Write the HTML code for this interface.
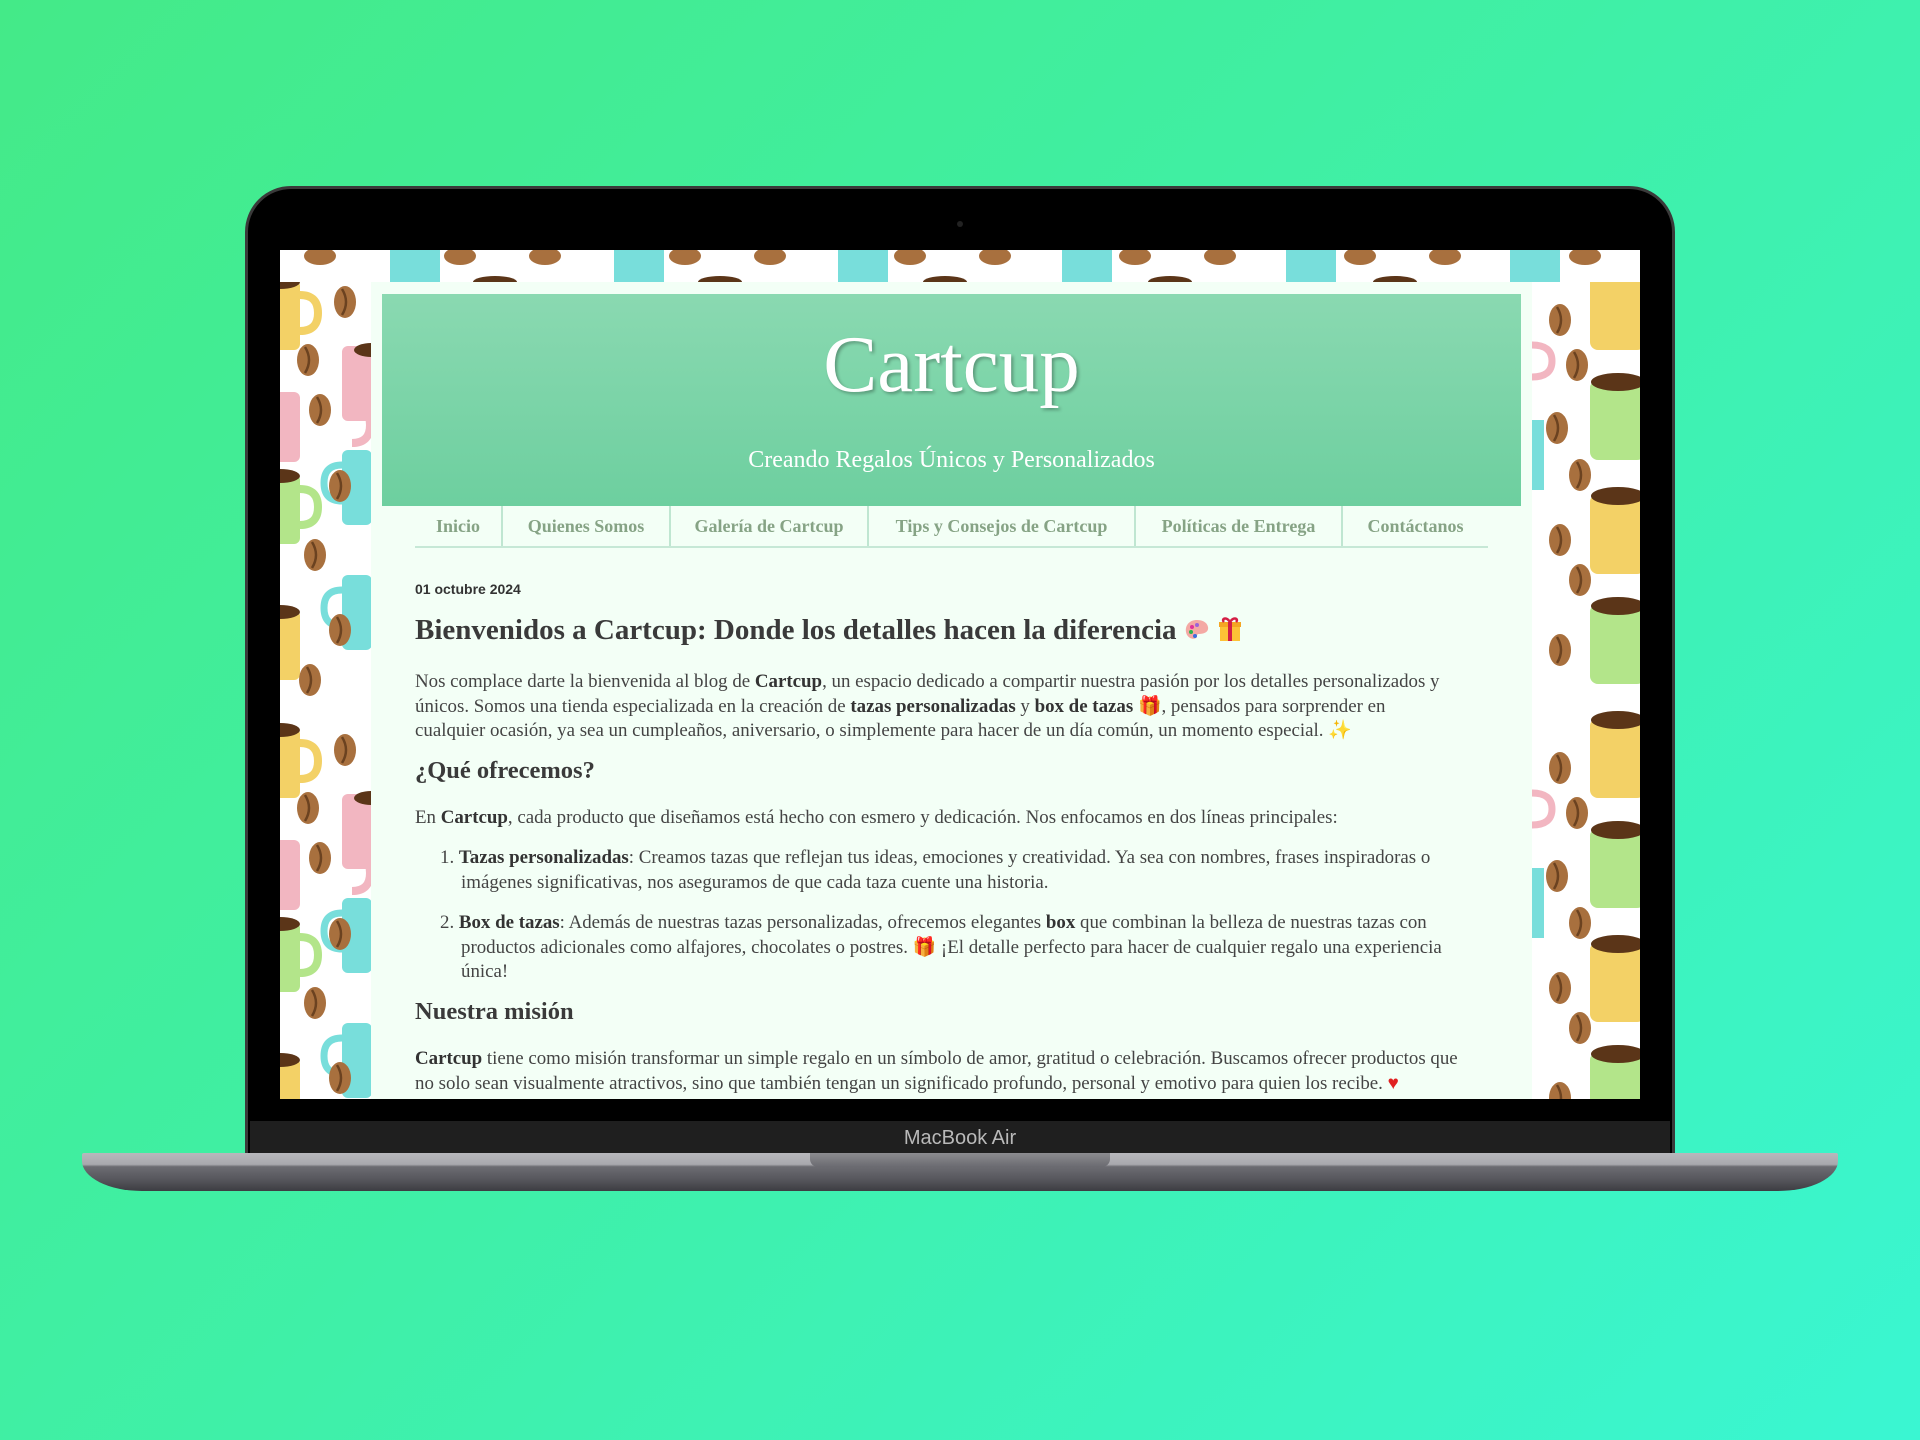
<!DOCTYPE html>
<html><head><meta charset="utf-8"><style>
*{margin:0;padding:0;box-sizing:border-box}
html,body{width:1920px;height:1440px;overflow:hidden}
body{background:linear-gradient(135deg,#44ea88 0%,#3ff0a8 50%,#3af6d2 100%);position:relative;font-family:"Liberation Serif",serif}
.abs{position:absolute}
#bezel{left:245px;top:186px;width:1430px;height:970px;background:#000;border-radius:46px 46px 0 0;border:3px solid #3a3a3a}
#chin{left:250px;top:1121px;width:1420px;height:33px;background:#1f1f1f}
#chin span{position:absolute;left:0;right:0;top:6px;text-align:center;color:#b9b9b9;font-family:"Liberation Sans",sans-serif;font-size:20px}
#base{left:82px;top:1153px;width:1756px;height:38px;background:linear-gradient(#b8b8bc 0,#a9a9ae 30%,#6c6c72 36%,#56565c 70%,#3d3d42 100%);border-radius:2px 2px 60px 60px/2px 2px 30px 30px}
#notch{left:810px;top:1153px;width:300px;height:14px;background:linear-gradient(#8c8c90,#6a6a70);border-radius:0 0 8px 8px}
#cam{left:957px;top:221px;width:6px;height:6px;border-radius:50%;background:#222}
#screen{left:280px;top:250px;width:1360px;height:849px;overflow:hidden;background:#fff}
#panel{left:91px;top:32px;width:1161px;height:900px;background:#f3fff6}
#hdr{left:11px;top:12px;width:1139px;height:212px;background:linear-gradient(#8ad9b1,#6dcf9f)}
#title{left:0;right:0;top:24px;text-align:center;color:#fff;font-size:81px;text-shadow:2px 2px 3px rgba(0,0,0,.3)}
#sub{left:0;right:0;top:153px;text-align:center;color:#fff;font-size:24px}
.nav{top:224px;height:41px;border-left:2px solid #bfe6d1;color:#86a385;font-weight:bold;font-size:18px;text-align:center;line-height:40px}
#navline{left:44px;top:264px;width:1073px;height:2px;background:#c6e8d6}
.t{left:135px;color:#444;font-size:18.9px;line-height:24.5px;white-space:nowrap}
.t b{color:#333}
h1{font-size:29px;color:#3a3a3a;font-weight:bold}
h3{font-size:24.5px;color:#3a3a3a;font-weight:bold}
</style></head><body>
<div id="bezel" class="abs"></div>
<div id="cam" class="abs"></div>
<div id="screen" class="abs">
<svg width="1360" height="849" style="position:absolute;left:0;top:0">
<defs>
<g id="bean"><ellipse rx="11" ry="16" fill="#a8703e"/><path d="M-3,-13 Q5,0 -3,13" stroke="#6b4220" stroke-width="2.5" fill="none"/></g>
<pattern id="pL" x="0" y="0" width="91" height="448" patternUnits="userSpaceOnUse">
<rect width="91" height="448" fill="#fff"/>
<g><rect x="-20" y="30" width="40" height="70" rx="6" fill="#f3d166"/><path d="M20,45 q18,0 18,18 q0,18 -18,18" stroke="#f3d166" stroke-width="8" fill="none"/><ellipse cx="0" cy="32" rx="20" ry="7" fill="#5b3518"/></g>
<g><rect x="-20" y="142" width="40" height="70" rx="6" fill="#f2b6c1"/><path d="M20,157 q18,0 18,18 q0,18 -18,18" stroke="#f2b6c1" stroke-width="8" fill="none" transform="translate(52,0)"/><rect x="62" y="96" width="30" height="75" rx="6" fill="#f2b6c1"/><ellipse cx="92" cy="100" rx="18" ry="7" fill="#5b3518"/></g>
<g><rect x="-20" y="224" width="40" height="70" rx="6" fill="#b3e58a"/><path d="M20,239 q18,0 18,18 q0,18 -18,18" stroke="#b3e58a" stroke-width="8" fill="none"/><ellipse cx="0" cy="226" rx="20" ry="7" fill="#5b3518"/></g>
<g><rect x="62" y="200" width="30" height="75" rx="6" fill="#78dedb"/><path d="M62,215 q-18,0 -18,18 q0,18 18,18" stroke="#78dedb" stroke-width="7" fill="none"/></g>
<g><rect x="62" y="325" width="30" height="75" rx="6" fill="#78dedb"/><path d="M62,340 q-18,0 -18,18 q0,18 18,18" stroke="#78dedb" stroke-width="7" fill="none"/></g>
<g><rect x="-20" y="360" width="40" height="70" rx="6" fill="#f3d166"/><ellipse cx="0" cy="362" rx="20" ry="7" fill="#5b3518"/></g>
<use href="#bean" x="65" y="52"/>
<use href="#bean" x="28" y="110"/>
<use href="#bean" x="40" y="160"/>
<use href="#bean" x="60" y="236"/>
<use href="#bean" x="35" y="305"/>
<use href="#bean" x="60" y="380"/>
<use href="#bean" x="30" y="430"/>
</pattern>
<pattern id="pR" x="1252" y="0" width="108" height="448" patternUnits="userSpaceOnUse">
<rect width="108" height="448" fill="#fff"/>
<g><rect x="58" y="20" width="55" height="80" rx="8" fill="#f3d166"/><ellipse cx="86" cy="22" rx="27" ry="9" fill="#5b3518"/></g>
<g><rect x="58" y="130" width="55" height="80" rx="8" fill="#b3e58a"/><ellipse cx="86" cy="132" rx="27" ry="9" fill="#5b3518"/></g>
<g><rect x="58" y="244" width="55" height="80" rx="8" fill="#f3d166"/><ellipse cx="86" cy="246" rx="27" ry="9" fill="#5b3518"/></g>
<g><rect x="58" y="354" width="55" height="80" rx="8" fill="#b3e58a"/><ellipse cx="86" cy="356" rx="27" ry="9" fill="#5b3518"/></g>
<rect x="-2" y="170" width="14" height="70" fill="#78dedb"/>
<path d="M0,95 q20,0 20,16 q0,16 -20,16" stroke="#f2b6c1" stroke-width="7" fill="none"/>
<use href="#bean" x="28" y="70"/>
<use href="#bean" x="45" y="115"/>
<use href="#bean" x="25" y="178"/>
<use href="#bean" x="48" y="225"/>
<use href="#bean" x="28" y="290"/>
<use href="#bean" x="48" y="330"/>
<use href="#bean" x="28" y="400"/>
</pattern>
</defs>
<rect x="0" y="0" width="1360" height="849" fill="url(#pL)"/>
<rect x="1252" y="0" width="108" height="849" fill="url(#pR)"/>
<g>
<rect x="0" y="0" width="1360" height="32" fill="#fff"/>
<g fill="#78dedb"><rect x="110" y="0" width="50" height="32"/><rect x="334" y="0" width="50" height="32"/><rect x="558" y="0" width="50" height="32"/><rect x="782" y="0" width="50" height="32"/><rect x="1006" y="0" width="50" height="32"/><rect x="1230" y="0" width="50" height="32"/></g>
<g fill="#a8703e"><ellipse cx="40" cy="6" rx="16" ry="9"/><ellipse cx="180" cy="6" rx="16" ry="9"/><ellipse cx="265" cy="6" rx="16" ry="9"/><ellipse cx="405" cy="6" rx="16" ry="9"/><ellipse cx="490" cy="6" rx="16" ry="9"/><ellipse cx="630" cy="6" rx="16" ry="9"/><ellipse cx="715" cy="6" rx="16" ry="9"/><ellipse cx="855" cy="6" rx="16" ry="9"/><ellipse cx="940" cy="6" rx="16" ry="9"/><ellipse cx="1080" cy="6" rx="16" ry="9"/><ellipse cx="1165" cy="6" rx="16" ry="9"/><ellipse cx="1305" cy="6" rx="16" ry="9"/></g>
<g fill="#5b3518"><ellipse cx="215" cy="32" rx="22" ry="6"/><ellipse cx="440" cy="32" rx="22" ry="6"/><ellipse cx="665" cy="32" rx="22" ry="6"/><ellipse cx="890" cy="32" rx="22" ry="6"/><ellipse cx="1115" cy="32" rx="22" ry="6"/></g>
</g>
</svg>
<div id="panel" class="abs">
<div id="hdr" class="abs">
<div id="title" class="abs">Cartcup</div>
<div id="sub" class="abs">Creando Regalos Únicos y Personalizados</div>
</div>
<div class="abs nav" style="left:44px;width:86px;border-left:none">Inicio</div>
<div class="abs nav" style="left:130px;width:168px">Quienes Somos</div>
<div class="abs nav" style="left:298px;width:198px">Galería de Cartcup</div>
<div class="abs nav" style="left:496px;width:267px">Tips y Consejos de Cartcup</div>
<div class="abs nav" style="left:763px;width:207px">Políticas de Entrega</div>
<div class="abs nav" style="left:970px;width:147px">Contáctanos</div>
<div id="navline" class="abs"></div>
</div>
<div class="abs t" style="left:135px;top:327px;font-family:'Liberation Sans',sans-serif;font-weight:bold;font-size:14px;color:#333">01 octubre 2024</div>
<div class="abs t" style="top:366px"><h1>Bienvenidos a Cartcup: Donde los detalles hacen la diferencia
<svg width="26" height="24" viewBox="0 0 26 24" style="vertical-align:-3px"><path d="M13,2 C4,2 1,9 2,14 C3,20 9,22 12,20 C14,18 12,16 15,16 C20,16 25,14 24,9 C23,4 18,2 13,2Z" fill="#f4a9a4"/><circle cx="8" cy="9" r="2" fill="#e0329a"/><circle cx="13" cy="7" r="2" fill="#9b63d8"/><circle cx="7" cy="14" r="2" fill="#2bb84e"/><circle cx="11" cy="18" r="2" fill="#3b6fe0"/></svg>
<svg width="26" height="26" viewBox="0 0 26 26" style="vertical-align:-3px"><rect x="3" y="9" width="20" height="16" fill="#fdc236"/><rect x="2" y="6" width="22" height="5" fill="#f5a623"/><rect x="11" y="6" width="4" height="19" fill="#d41e45"/><path d="M13,6 C9,0 4,3 7,6 M13,6 C17,0 22,3 19,6" stroke="#d41e45" stroke-width="2.5" fill="none"/></svg></h1></div>
<div class="abs t" style="top:420px">Nos complace darte la bienvenida al blog de <b>Cartcup</b>, un espacio dedicado a compartir nuestra pasión por los detalles personalizados y<br>únicos. Somos una tienda especializada en la creación de <b>tazas personalizadas</b> y <b>box de tazas</b> <span style="color:#e33">🎁</span>, pensados para sorprender en<br>cualquier ocasión, ya sea un cumpleaños, aniversario, o simplemente para hacer de un día común, un momento especial. <span style="color:#f5c518">✨</span></div>
<div class="abs t" style="top:509px"><h3>¿Qué ofrecemos?</h3></div>
<div class="abs t" style="top:556px">En <b>Cartcup</b>, cada producto que diseñamos está hecho con esmero y dedicación. Nos enfocamos en dos líneas principales:</div>
<div class="abs t" style="top:596px;left:160px">1. <b>Tazas personalizadas</b>: Creamos tazas que reflejan tus ideas, emociones y creatividad. Ya sea con nombres, frases inspiradoras o<br><span style="padding-left:21px">imágenes significativas, nos aseguramos de que cada taza cuente una historia.</span></div>
<div class="abs t" style="top:661px;left:160px">2. <b>Box de tazas</b>: Además de nuestras tazas personalizadas, ofrecemos elegantes <b>box</b> que combinan la belleza de nuestras tazas con<br><span style="padding-left:21px">productos adicionales como alfajores, chocolates o postres. <span style="color:#e33">🎁</span> ¡El detalle perfecto para hacer de cualquier regalo una experiencia</span><br><span style="padding-left:21px">única!</span></div>
<div class="abs t" style="top:750px"><h3>Nuestra misión</h3></div>
<div class="abs t" style="top:797px"><b>Cartcup</b> tiene como misión transformar un simple regalo en un símbolo de amor, gratitud o celebración. Buscamos ofrecer productos que<br>no solo sean visualmente atractivos, sino que también tengan un significado profundo, personal y emotivo para quien los recibe. <span style="color:#e02020">♥</span></div>
</div>
<div id="chin" class="abs"><span>MacBook Air</span></div>
<div id="base" class="abs"></div>
<div id="notch" class="abs"></div>
</body></html>
